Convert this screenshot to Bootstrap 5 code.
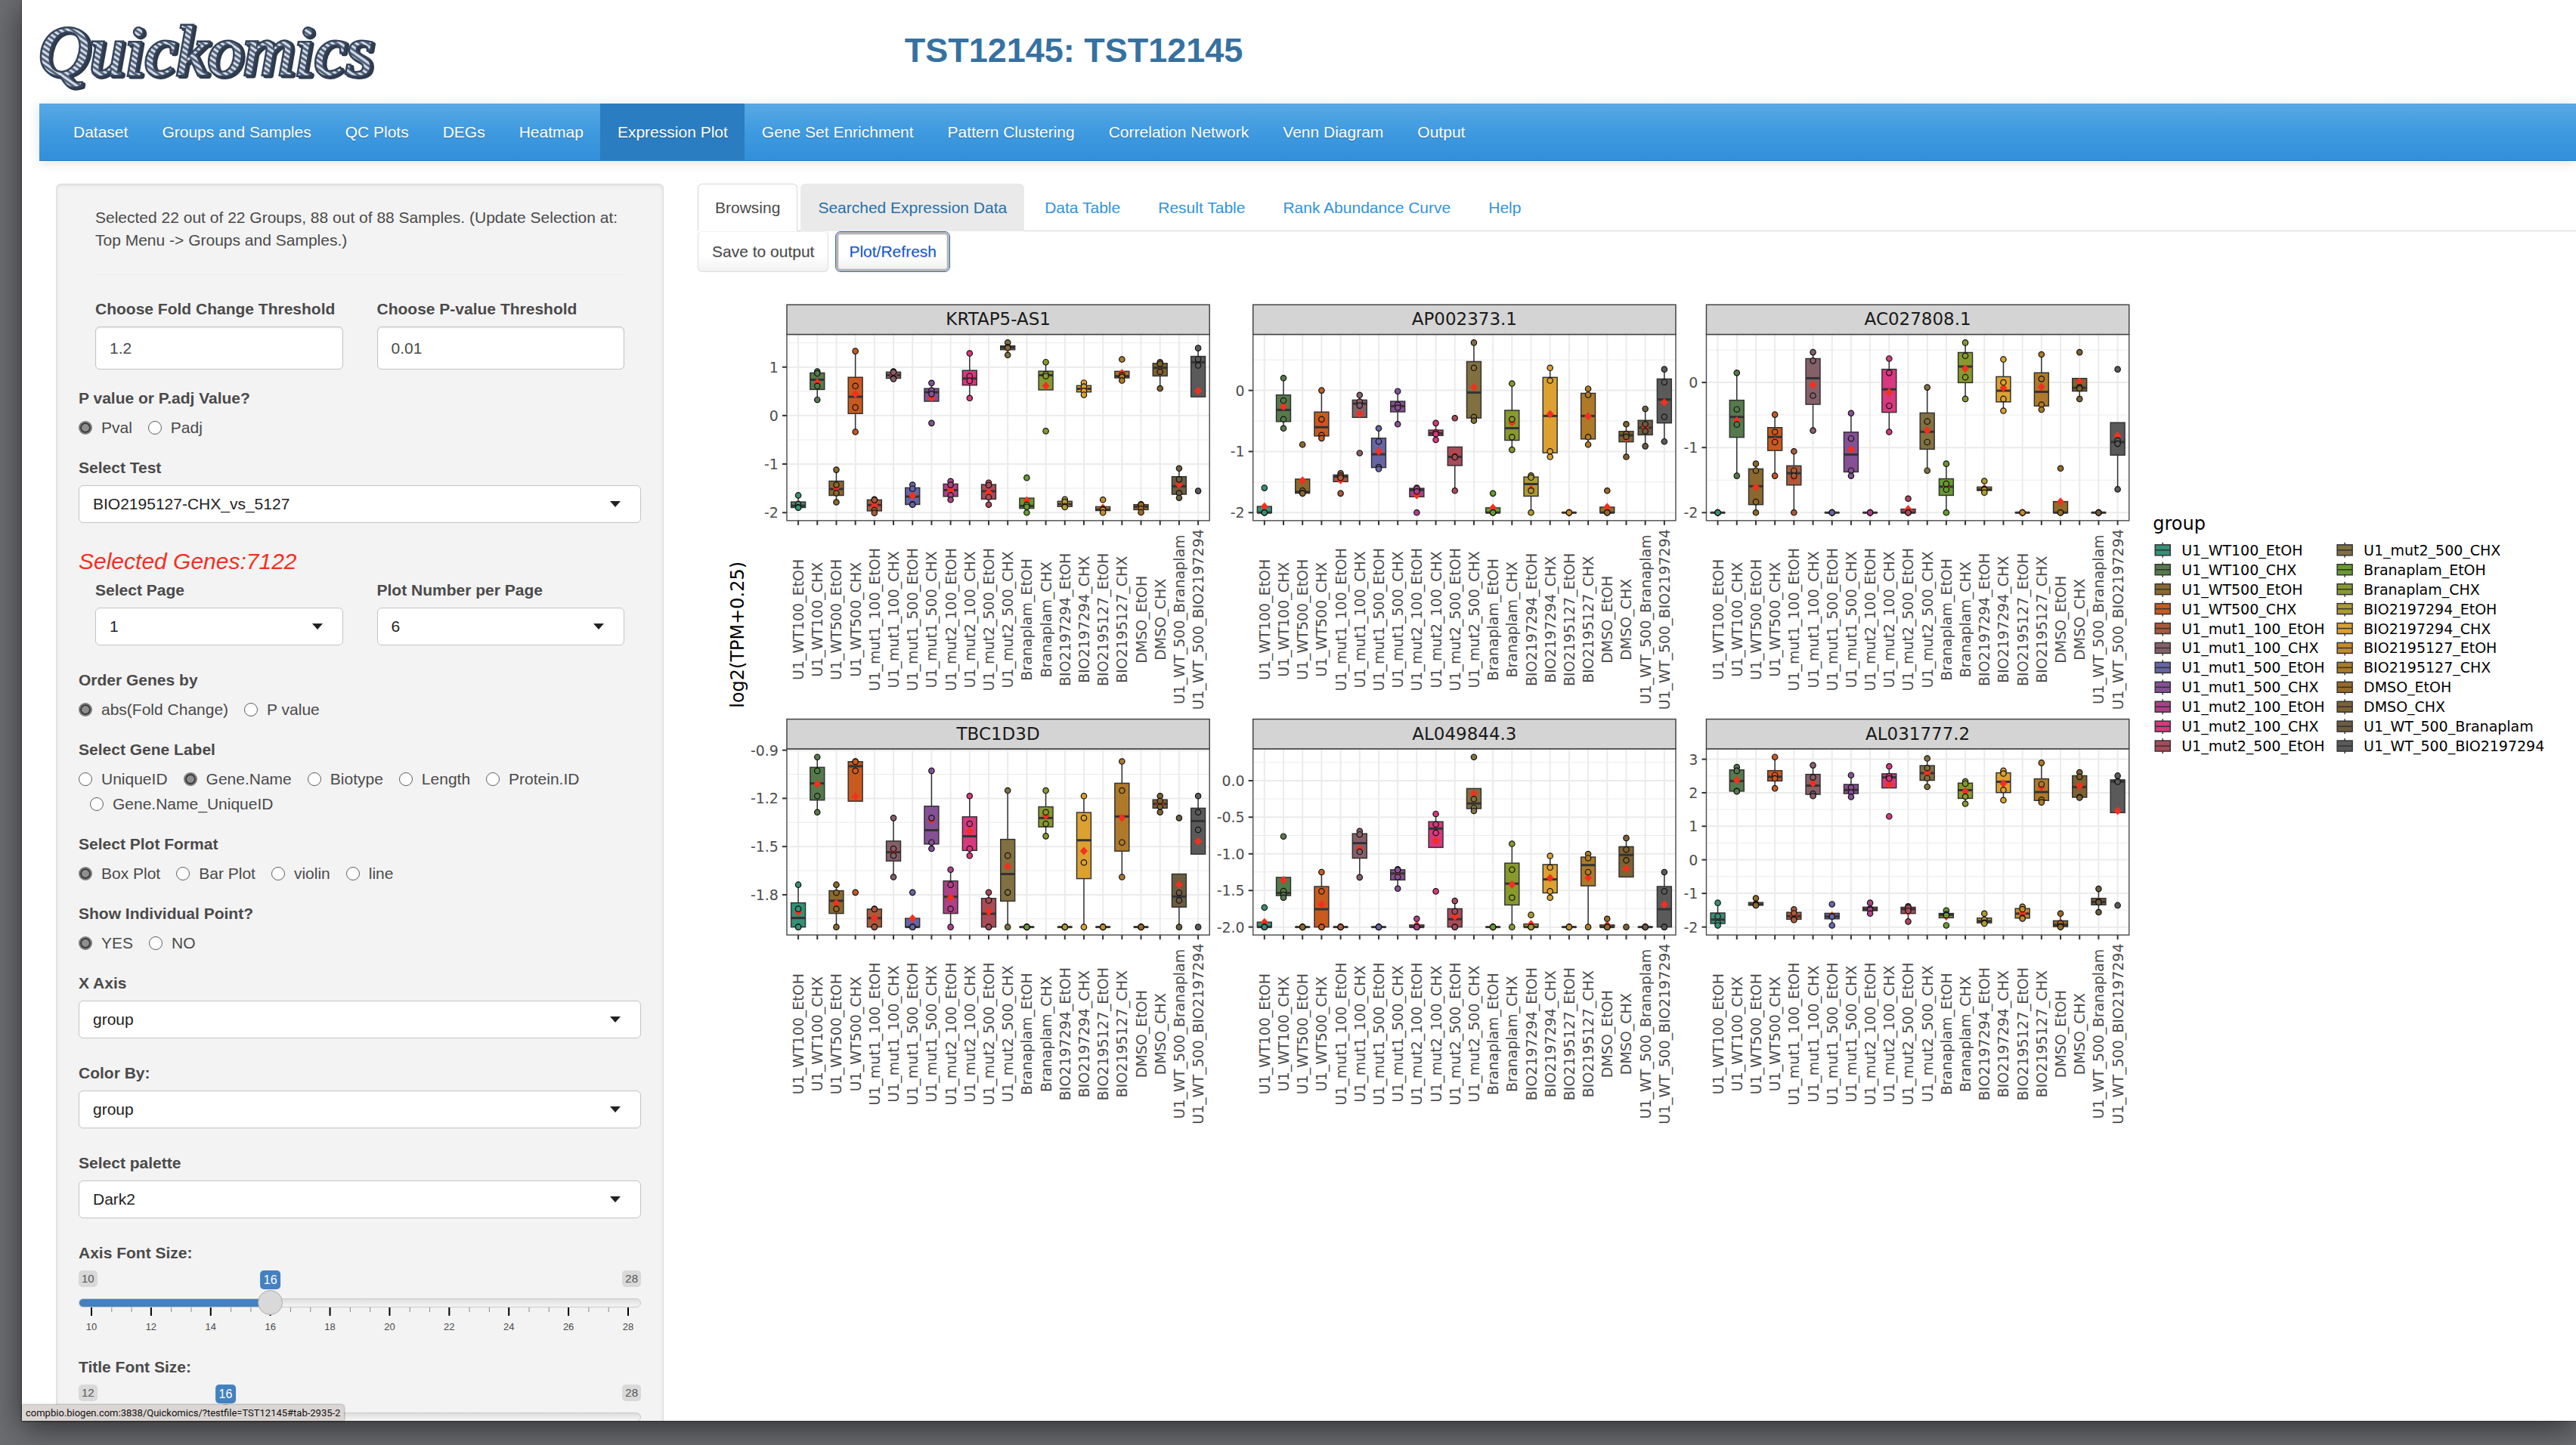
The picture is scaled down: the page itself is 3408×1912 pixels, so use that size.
<!DOCTYPE html>
<html lang="en">
<head>
<meta charset="utf-8">
<meta name="viewport" content="width=device-width, initial-scale=1">
<title>Quickomics</title>
<link href="https://cdn.jsdelivr.net/npm/bootstrap@5.3.0/dist/css/bootstrap.min.css" rel="stylesheet">
<script src="https://cdn.jsdelivr.net/npm/bootstrap@5.3.0/dist/js/bootstrap.bundle.min.js"></script>
<style>
body { background: #6c6d71; color: #4a4a4a; font-family: "Liberation Sans", Arial, sans-serif; font-size: 21px; line-height: 30px; overflow: hidden; }
.app-window { margin: 0 0 32px 29px; height: calc(100vh - 32px); background: #fff; box-shadow: 0 10px 40px rgba(0,0,0,.55), 0 0 2px rgba(0,0,0,.7); }
.app-page { padding-left: 23px; height: 100%; overflow: hidden; }
.app-head { height: 137px; }
.app-logo { display: block; width: 460px; height: 137px; overflow: visible; }
.app-logo text { font: italic 94px "Liberation Serif", serif; }
.app-title { color: #3671a0; font-size: 45px; font-weight: 700; line-height: 60px; margin: 37px 0 0 26px; }
.app-nav { padding: 0 0 0 22px; background: linear-gradient(#57a9e3, #3f9adf 50%, #328fda); border-bottom: 1px solid #2a7dc0; box-shadow: 0 2px 15px rgba(0,0,0,.12); }
.app-nav .navbar-nav .nav-link { color: #fff; padding: 23px 22px 22px 23px; text-shadow: 0 1px 1px rgba(0,0,0,.25); }
.app-nav .navbar-nav .nav-link.active { color: #fff; background: #2a7dc0; }
.app-body { padding: 30px 0 0 22px; gap: 45px; }
.side-well { flex: 0 0 804px; background: #f3f3f3; border: 1px solid #dcdcdc; border-radius: 6px; padding: 29px 29px 60px; box-shadow: inset 0 2px 4px rgba(0,0,0,.08); }
.side-inset { padding: 0 22px; }
.side-inset hr { margin: 30px 0; color: #d5d5d5; }
.pair { display: grid; grid-template-columns: 1fr 1fr; gap: 45px; padding: 0 22px; }
.field { margin-bottom: 23px; }
.field-select { margin-bottom: 31px; }
.field-title { display: block; font-size: 21px; font-weight: 700; line-height: 30px; margin: 0 0 8px; float: none; }
.side-well .form-control { height: 57px; font-size: 21px; line-height: 30px; color: #4a4a4a; padding: 0 18px; border: 1px solid #c4c4c4; border-radius: 6px; box-shadow: inset 0 1px 2px rgba(0,0,0,.1); }
.side-well .form-select { height: 50px; font-size: 21px; line-height: 30px; color: #222; padding: 0 50px 0 18px; border: 1px solid #c4c4c4; border-radius: 6px; background: #fff url("data:image/svg+xml,%3Csvg xmlns='http://www.w3.org/2000/svg' viewBox='0 0 14 8'%3E%3Cpath fill='%23222' d='M0 0h14L7 8z'/%3E%3C/svg%3E") no-repeat right 26px center / 14px 8px; }
.choices { display: flex; flex-wrap: wrap; gap: 2px 6px; }
.choice { display: flex; align-items: center; gap: 12px; line-height: 31px; margin-left: 15px; }
.choice:first-child { margin-left: 0; }
.choice input { appearance: none; width: 18px; height: 18px; margin: 0; border: 1px solid #5e5e5e; border-radius: 50%; background: #fff; }
.choice input:checked { border: 2px solid #7c7c7c; background: #8f8f8f; box-shadow: inset 0 0 0 2px #3a3a3a; }
.gene-count { color: #f3301f; font-style: italic; font-size: 30px; line-height: 40px; margin: 0 0 3px; }
.slide { height: 90px; }
.slide-tags { position: relative; display: flex; justify-content: space-between; height: 26px; }
.tag { height: 22px; padding: 0 4px; border-radius: 5px; background: #d9d9d9; color: #555; font-size: 15px; line-height: 22px; }
.tag-now { position: absolute; top: 0; left: calc(17px + (100% - 34px) * var(--f)); transform: translateX(-50%); height: 25px; padding: 0 5px; border-radius: 5px; background: #4381c0; color: #fff; font-size: 16px; line-height: 25px; }
.slide input { appearance: none; display: block; position: relative; z-index: 1; width: 100%; height: 33px; margin: 0; background: transparent; }
.slide input::-webkit-slider-runnable-track { height: 12px; border: 1px solid #c9c9c9; border-radius: 6px; background: linear-gradient(90deg, #4381c0 calc(var(--f) * 100%), transparent 0), linear-gradient(#dedede, #f5f5f5); }
.slide input::-webkit-slider-thumb { appearance: none; width: 33px; height: 33px; margin-top: -12px; border: 1px solid #ababab; border-radius: 50%; background: #d9d9d9; }
.slide svg { display: block; width: 100%; margin-top: -10px; }
.slide svg text { font: 13px "Liberation Sans", sans-serif; fill: #4a4a4a; text-anchor: middle; }
.main-tabs { border-bottom: 1px solid #d5d5d5; }
.main-tabs .nav-link { padding: 16px 22px 15px; color: #3393dc; margin-right: 4px; border-radius: 6px 6px 0 0; }
.main-tabs .nav-link.active { color: #4a4a4a; border-color: #d5d5d5 #d5d5d5 #fff; }
.main-tabs .nav-link.hovered { color: #2a6fa5; background: #eaeaea; }
.tool { height: 54px; padding: 0 18px; border: 1px solid #ddd; border-top-color: #f0f0f0; border-radius: 6px; background: linear-gradient(#fff 60%, #f1f1f1); color: #4a4a4a; font-size: 21px; line-height: 30px; text-shadow: 0 1px 1px rgba(0,0,0,.15); }
.tool-hot { height: 52px; margin: 1px 1px 1px 2px; padding: 0 14px; border: 3px solid #b5b5b5; color: #1459d4; outline: 1px solid #3f6fae; box-shadow: inset 0 0 0 1px #e4e4e4; }
.plots { display: block; width: 100%; }
.plots text { font-family: "DejaVu Sans", sans-serif; }
.tick-text { font-size: 19px; fill: #4d4d4d; }
.head-text { font-size: 23px; fill: #1a1a1a; text-anchor: middle; }
.axis-name { font-size: 24px; fill: #000; }
.key-text { font-size: 19px; fill: #000; }
.status { position: absolute; left: 29px; bottom: 32px; height: 21px; padding: 0 5px; border-radius: 0 4px 0 0; background: #dbd5d3; color: #111; font: 13px/21px Roboto, sans-serif; box-shadow: 0 0 3px rgba(0,0,0,.6); z-index: 5; }
</style>
</head>
<body>
<div class="app-window">
<div class="app-page">
  <header class="app-head d-flex">
    <div class="col-4">
      <svg class="app-logo" viewBox="0 0 460 137" role="img" aria-label="Quickomics">
        <defs><pattern id="rope" width="6" height="6" patternUnits="userSpaceOnUse" patternTransform="rotate(35)"><rect width="6" height="6" fill="#d3dbe6"/><rect width="6" height="3" fill="#54637a"/></pattern></defs>
        <text x="1" y="101" fill="#2d3a4b" stroke="#2d3a4b" stroke-width="6" stroke-linejoin="round">Quickomics</text>
        <text x="-2" y="99" fill="url(#rope)" stroke="#35435a" stroke-width="5" paint-order="stroke">Quickomics</text>
      </svg>
    </div>
    <h1 class="app-title">TST12145: TST12145</h1>
  </header>
  <nav class="app-nav navbar navbar-expand" aria-label="Main">
    <div class="navbar-nav">
      <a class="nav-link" href="#">Dataset</a>
      <a class="nav-link" href="#">Groups and Samples</a>
      <a class="nav-link" href="#">QC Plots</a>
      <a class="nav-link" href="#">DEGs</a>
      <a class="nav-link" href="#">Heatmap</a>
      <a class="nav-link active" href="#" aria-current="page">Expression Plot</a>
      <a class="nav-link" href="#">Gene Set Enrichment</a>
      <a class="nav-link" href="#">Pattern Clustering</a>
      <a class="nav-link" href="#">Correlation Network</a>
      <a class="nav-link" href="#">Venn Diagram</a>
      <a class="nav-link" href="#">Output</a>
    </div>
  </nav>
  <div class="app-body d-flex align-items-start">
    <form class="side-well">
      <div class="side-inset">
        <p class="m-0">Selected 22 out of 22 Groups, 88 out of 88 Samples. (Update Selection at: Top Menu -&gt; Groups and Samples.)</p>
        <hr>
      </div>
      <div class="pair field">
        <div><label class="field-title" for="fc">Choose Fold Change Threshold</label><input class="form-control" id="fc" type="text" inputmode="decimal" value="1.2"></div>
        <div><label class="field-title" for="pv">Choose P-value Threshold</label><input class="form-control" id="pv" type="text" inputmode="decimal" value="0.01"></div>
      </div>
      <fieldset class="field">
        <legend class="field-title">P value or P.adj Value?</legend>
        <div class="choices">
          <label class="choice"><input type="radio" name="psel" checked>Pval</label>
          <label class="choice"><input type="radio" name="psel">Padj</label>
        </div>
      </fieldset>
      <div class="field-select"><label class="field-title" for="test">Select Test</label><select class="form-select" id="test"><option>BIO2195127-CHX_vs_5127</option></select></div>
      <p class="gene-count">Selected Genes:7122</p>
      <div class="pair field-select">
        <div><label class="field-title" for="pg">Select Page</label><select class="form-select" id="pg"><option>1</option></select></div>
        <div><label class="field-title" for="pn">Plot Number per Page</label><select class="form-select" id="pn"><option>6</option></select></div>
      </div>
      <fieldset class="field">
        <legend class="field-title">Order Genes by</legend>
        <div class="choices">
          <label class="choice"><input type="radio" name="ord" checked>abs(Fold Change)</label>
          <label class="choice"><input type="radio" name="ord">P value</label>
        </div>
      </fieldset>
      <fieldset class="field">
        <legend class="field-title">Select Gene Label</legend>
        <div class="choices">
          <label class="choice"><input type="radio" name="lab">UniqueID</label>
          <label class="choice"><input type="radio" name="lab" checked>Gene.Name</label>
          <label class="choice"><input type="radio" name="lab">Biotype</label>
          <label class="choice"><input type="radio" name="lab">Length</label>
          <label class="choice"><input type="radio" name="lab">Protein.ID</label>
          <label class="choice"><input type="radio" name="lab">Gene.Name_UniqueID</label>
        </div>
      </fieldset>
      <fieldset class="field">
        <legend class="field-title">Select Plot Format</legend>
        <div class="choices">
          <label class="choice"><input type="radio" name="fmt" checked>Box Plot</label>
          <label class="choice"><input type="radio" name="fmt">Bar Plot</label>
          <label class="choice"><input type="radio" name="fmt">violin</label>
          <label class="choice"><input type="radio" name="fmt">line</label>
        </div>
      </fieldset>
      <fieldset class="field">
        <legend class="field-title">Show Individual Point?</legend>
        <div class="choices">
          <label class="choice"><input type="radio" name="pt" checked>YES</label>
          <label class="choice"><input type="radio" name="pt">NO</label>
        </div>
      </fieldset>
      <div class="field-select"><label class="field-title" for="xa">X Axis</label><select class="form-select" id="xa"><option>group</option></select></div>
      <div class="field-select"><label class="field-title" for="cb">Color By:</label><select class="form-select" id="cb"><option>group</option></select></div>
      <div class="field-select"><label class="field-title" for="pal">Select palette</label><select class="form-select" id="pal"><option>Dark2</option></select></div>
      <div class="field">
        <label class="field-title" for="axsize">Axis Font Size:</label>
        <div class="slide" style="--f:0.3333">
          <div class="slide-tags"><span class="tag">10</span><span class="tag-now">16</span><span class="tag">28</span></div>
          <input id="axsize" type="range" min="10" max="28" value="16">
        </div>
      </div>
      <div class="field">
        <label class="field-title" for="tisize">Title Font Size:</label>
        <div class="slide" style="--f:0.25">
          <div class="slide-tags"><span class="tag">12</span><span class="tag-now">16</span><span class="tag">28</span></div>
          <input id="tisize" type="range" min="12" max="28" value="16">
        </div>
      </div>
    </form>
    <main class="flex-grow-1">
      <ul class="nav nav-tabs main-tabs">
        <li class="nav-item"><a class="nav-link active" href="#">Browsing</a></li>
        <li class="nav-item"><a class="nav-link hovered" href="#">Searched Expression Data</a></li>
        <li class="nav-item"><a class="nav-link" href="#">Data Table</a></li>
        <li class="nav-item"><a class="nav-link" href="#">Result Table</a></li>
        <li class="nav-item"><a class="nav-link" href="#">Rank Abundance Curve</a></li>
        <li class="nav-item"><a class="nav-link" href="#">Help</a></li>
      </ul>
      <div class="d-flex align-items-start gap-2">
        <button class="tool" type="button">Save to output</button>
        <button class="tool tool-hot" type="button">Plot/Refresh</button>
      </div>
      <svg class="plots" id="plots" viewBox="922 360 2486 1140" role="img" aria-label="Expression box plots"></svg>
    </main>
  </div>
</div>
</div>
<div class="status">compbio.biogen.com:3838/Quickomics/?testfile=TST12145#tab-2935-2</div>
<script>
const groups = [
  ['U1_WT100_EtOH', '#359076'], ['U1_WT100_CHX', '#557a4b'], ['U1_WT500_EtOH', '#8b682d'], ['U1_WT500_CHX', '#c95a1e'],
  ['U1_mut1_100_EtOH', '#a95a3b'], ['U1_mut1_100_CHX', '#856069'], ['U1_mut1_500_EtOH', '#6665a4'], ['U1_mut1_500_CHX', '#855095'],
  ['U1_mut2_100_EtOH', '#ad4088'], ['U1_mut2_100_CHX', '#d7387e'], ['U1_mut2_500_EtOH', '#a84b59'], ['U1_mut2_500_CHX', '#817040'],
  ['Branaplam_EtOH', '#679a31'], ['Branaplam_CHX', '#88992e'], ['BIO2197294_EtOH', '#ae9a31'], ['BIO2197294_CHX', '#dca131'],
  ['BIO2195127_EtOH', '#c48c2b'], ['BIO2195127_CHX', '#ae7a29'], ['DMSO_EtOH', '#966a28'], ['DMSO_CHX', '#7d6233'],
  ['U1_WT_500_Branaplam', '#6b5c42'], ['U1_WT_500_BIO2197294', '#5a5a5a']
];
// Four samples per group, as depth on a fine grid of K steps per unit; ticks use the same grid.
const K = 2.751;
const panels = [
  { gene: 'KRTAP5-AS1', x: 1040, top: 380, head: 64, ticks: [['1', 291], ['0', 467.5], ['-1', 644], ['-2', 821]],
    d: [[758,790,802,803],[307,314,360,410],[665,720,750,783],[233,360,438,527],[773,775,812,822],[307,310,331,334],[720,734,791,792],[349,376,389,495],[707,720,758,774],[241,324,341,404],[712,721,765,792],[202,218,221,247],[694,793,800,821],[273,317,324,524],[773,782,798,801],[348,362,378,392],[774,808,811,821],[263,321,327,340],[791,792,807,820],[273,279,308,369],[660,700,750,767],[222,262,285,742]] },
  { gene: 'AP002373.1', x: 1657, top: 380, head: 64, ticks: [['0', 376], ['-1', 598.5], ['-2', 821]],
    d: [[731,821,821,821],[331,413,481,514],[573,741,750,751],[376,481,539,550],[678,686,694,751],[393,417,431,604],[514,562,655,662],[379,428,439,499],[731,733,744,821],[495,529,535,556],[477,617,619,741],[202,294,473,486],[751,821,821,821],[351,481,546,592],[686,693,741,821],[294,340,598,618],[821,821,821,821],[370,392,546,573],[741,821,821,821],[499,534,545,618],[443,499,524,579],[299,346,472,562]] },
  { gene: 'AC027808.1', x: 2257, top: 380, head: 64, ticks: [['0', 347], ['-1', 584], ['-2', 821]],
    d: [[821,821,821,821],[312,445,500,687],[643,668,782,821],[464,527,564,687],[598,668,687,821],[237,268,395,522],[821,821,821,821],[459,551,668,687],[821,821,821,821],[260,312,432,527],[770,821,821,821],[365,489,564,668],[643,716,737,821],[202,250,328,407],[706,735,738,748],[263,347,407,450],[821,821,821,821],[245,334,428,446],[660,821,821,821],[237,364,369,407],[821,821,821,821],[299,558,570,736]] },
  { gene: 'TBC1D3D', x: 1040, top: 930, head: 60, ticks: [['-0.9', 173], ['-1.2', 348.5], ['-1.5', 524], ['-1.8', 699.5]],
    d: [[663,751,817,817],[198,248,340,399],[663,692,751,817],[214,215,248,691],[751,752,817,817],[420,532,557,635],[691,817,817,817],[248,420,509,532],[608,663,751,817],[340,441,532,557],[691,720,817,817],[320,557,691,817],[817,817,817,817],[320,399,441,486],[817,817,817,817],[340,420,582,817],[817,817,817,817],[214,320,509,635],[817,817,817,817],[340,358,379,399],[420,692,720,817],[340,399,463,817]] },
  { gene: 'AL049844.3', x: 1657, top: 930, head: 60, ticks: [['0.0', 284], ['-0.5', 417], ['-1.0', 550.5], ['-1.5', 684], ['-2.0', 817]],
    d: [[746,817,817,817],[487,686,700,710],[817,817,817,817],[617,687,817,817],[817,817,817,817],[468,480,543,636],[817,817,817,817],[607,609,635,677],[787,817,817,817],[405,443,474,687],[722,760,817,817],[198,351,383,394],[817,817,817,817],[514,608,710,817],[773,817,817,817],[558,600,687,710],[817,817,817,817],[551,566,617,817],[787,817,817,817],[493,535,574,817],[817,817,817,817],[617,687,817,817]] },
  { gene: 'AL031777.2', x: 2257, top: 930, head: 60, ticks: [['3', 206], ['2', 328], ['1', 450], ['0', 572], ['-1', 694.5], ['-2', 817]],
    d: [[729,778,802,811],[235,248,322,323],[712,733,737,738],[198,264,276,312],[753,767,788,791],[228,272,332,340],[734,778,779,811],[264,309,327,343],[729,750,754,768],[232,268,276,414],[742,746,758,797],[203,238,275,306],[757,771,774,811],[287,295,342,368],[768,790,801,804],[248,258,318,355],[743,752,784,786],[219,297,354,363],[768,803,815,817],[254,270,344,346],[678,724,727,763],[266,286,288,738]] }
];
const W = 559.5, STEP = W / 22.2, HALF = STEP * 0.375;
let out = '';
const line = (x1, y1, x2, y2, c, w) => { out += `<line x1="${x1}" y1="${y1}" x2="${x2}" y2="${y2}" stroke="${c}" stroke-width="${w}"/>`; };
for (const p of panels) {
  const py = v => p.top + v / K;
  const y0 = py(p.head), y1 = py(p.head + 108), y2 = py(p.head + 786);
  const xs = groups.map((g, i) => p.x + STEP * (0.6 + i));
  const gap = p.ticks[1][1] - p.ticks[0][1];
  for (let m = p.ticks[0][1] - gap / 2; py(m) < y2; m += gap) if (py(m) > y1) line(p.x, py(m), p.x + W, py(m), '#ebebeb', 1);
  for (const t of p.ticks) line(p.x, py(t[1]), p.x + W, py(t[1]), '#ebebeb', 2);
  for (const x of xs) line(x, y1, x, y2, '#ebebeb', 2);
  p.d.forEach((v, i) => {
    const x = xs[i], c = groups[i][1];
    const q3 = v[1] + (v[0] - v[1]) / 4, q1 = v[2] + (v[3] - v[2]) / 4, med = (v[1] + v[2]) / 2, reach = 1.5 * (q1 - q3);
    const inside = v.filter(a => a >= q3 - reach && a <= q1 + reach);
    if (inside[0] < q3) line(x, py(inside[0]), x, py(q3), '#333', 1.5);
    if (inside[inside.length - 1] > q1) line(x, py(q1), x, py(inside[inside.length - 1]), '#333', 1.5);
    out += `<rect x="${x - HALF}" y="${py(q3)}" width="${HALF * 2}" height="${Math.max(0.1, (q1 - q3) / K)}" fill="${c}" stroke="#333" stroke-width="1.5"/>`;
    line(x - HALF, py(med), x + HALF, py(med), '#333', 3);
    const m = py((v[0] + v[1] + v[2] + v[3]) / 4);
    out += `<path d="M${x} ${m - 5.5}l5 5.5-5 5.5-5-5.5z" fill="#f3301f"/>`;
    for (const a of v) out += `<circle cx="${x}" cy="${py(a)}" r="3.7" fill="${c}" stroke="#111" stroke-width="1.2"/>`;
  });
  out += `<rect x="${p.x}" y="${y1}" width="${W}" height="${y2 - y1}" fill="none" stroke="#555" stroke-width="1.5"/>`;
  out += `<rect x="${p.x}" y="${y0}" width="${W}" height="${y1 - y0}" fill="#d4d4d4" stroke="#444" stroke-width="1.5"/>`;
  out += `<text class="head-text" x="${p.x + W / 2}" y="${y0 + 27}">${p.gene}</text>`;
  for (const t of p.ticks) {
    line(p.x - 6, py(t[1]), p.x, py(t[1]), '#333', 2);
    out += `<text class="tick-text" text-anchor="end" x="${p.x - 11}" y="${py(t[1]) + 7}">${t[0]}</text>`;
  }
  xs.forEach((x, i) => {
    line(x, y2, x, y2 + 6, '#333', 2);
    out += `<text class="tick-text" text-anchor="middle" transform="translate(${x + 7} ${y2 + 131}) rotate(-90)">${groups[i][0]}</text>`;
  });
}
out += '<text class="axis-name" text-anchor="middle" transform="translate(983 840) rotate(-90)">log2(TPM+0.25)</text>';
out += '<text class="axis-name" x="2848" y="701">group</text>';
groups.forEach(([name, c], i) => {
  const x = i < 11 ? 2851 : 3092, y = 728 + (i % 11) * 25.93;
  line(x + 10, y - 10, x + 10, y + 10, '#333', 1.5);
  out += `<rect x="${x}" y="${y - 7}" width="20" height="14" fill="${c}" stroke="#333" stroke-width="1.5"/>`;
  line(x, y, x + 20, y, '#333', 1.5);
  out += `<text class="key-text" x="${x + 35}" y="${y + 7}">${name}</text>`;
});
document.getElementById('plots').innerHTML = out;

// Scale under each slider: a labelled tick at every even step, two short ticks between.
for (const s of document.querySelectorAll('.slide')) {
  const r = s.querySelector('input'), lo = +r.min, n = (+r.max - lo) / 2, w = 710 / n;
  let t = '';
  for (let i = 0; i <= n; i++) {
    const x = 17 + w * i;
    t += `<rect x="${x - 1}" y="0" width="2" height="11" fill="#000"/><text x="${x}" y="30">${lo + 2 * i}</text>`;
    if (i < n) for (const k of [1, 2]) t += `<rect x="${x + w * k / 3}" y="0" width="1" height="6" fill="#888"/>`;
  }
  s.insertAdjacentHTML('beforeend', `<svg viewBox="0 0 744 36" aria-hidden="true">${t}</svg>`);
}
</script>
</body>
</html>
